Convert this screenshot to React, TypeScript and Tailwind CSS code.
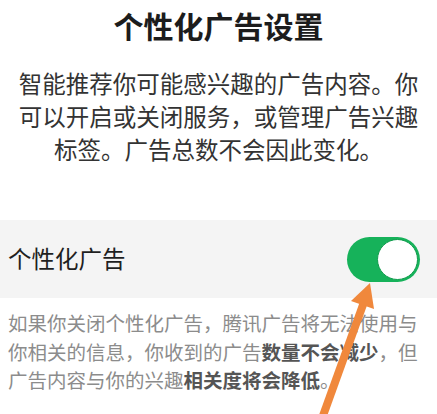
const cjk = { fontFamily: '"Noto Sans CJK SC", "Noto Sans", sans-serif' };

function Toggle() {
  return (
    <div className="relative h-[45px] w-[73px] shrink-0 rounded-full bg-[#16b25a]">
      <div className="absolute right-[2px] top-[2px] h-[41px] w-[41px] rounded-full border-[1.5px] border-[#0f9c4c] bg-white" />
    </div>
  );
}

function Arrow() {
  return (
    <svg className="pointer-events-none absolute inset-0" width="437" height="414" viewBox="0 0 437 414">
      <line x1="320" y1="424" x2="364" y2="302" stroke="#f0883c" strokeWidth="8" />
      <polygon points="370,283 351,301 374,309" fill="#f0883c" />
    </svg>
  );
}

export default function App() {
  return (
    <div className="relative h-[414px] w-[437px] overflow-hidden bg-white" style={cjk}>
      <h1 className="pt-[6px] text-center text-[30px] font-bold leading-[39px] text-[#1c1c1c]">个性化广告设置</h1>

      <p className="mt-[22px] text-center text-[23.5px] leading-[33px] text-[#333333]">
        <span className="block whitespace-nowrap">智能推荐你可能感兴趣的广告内容。你</span>
        <span className="block whitespace-nowrap">可以开启或关闭服务，或管理广告兴趣</span>
        <span className="block whitespace-nowrap">标签。广告总数不会因此变化。</span>
      </p>

      <div className="mt-[54px] flex h-[78px] items-center justify-between bg-[#f4f4f4] pl-[8px] pr-[17px]">
        <span className="text-[23.5px] text-[#1f1f1f]">个性化广告</span>
        <Toggle />
      </div>

      <p className="mt-[11px] px-[8px] text-[19.5px] leading-[28.5px] text-[#8c8c8c]">
        <span className="block whitespace-nowrap">如果你关闭个性化广告，腾讯广告将无法使用与</span>
        <span className="block whitespace-nowrap">
          你相关的信息，你收到的广告<b className="font-semibold text-[#555555]">数量不会减少</b>，但
        </span>
        <span className="block whitespace-nowrap">
          广告内容与你的兴趣<b className="font-semibold text-[#555555]">相关度将会降低</b>。
        </span>
      </p>

      <Arrow />
    </div>
  );
}
